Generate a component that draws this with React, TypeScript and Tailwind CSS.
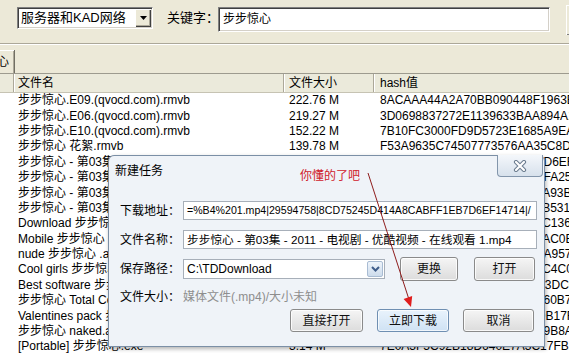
import React from "react";

const rows: [string, string, string][] = [
  ["步步惊心.E09.(qvocd.com).rmvb", "222.76 M", "8ACAAA44A2A70BB090448F1963B5D2E0"],
  ["步步惊心.E06.(qvocd.com).rmvb", "219.27 M", "3D0698837272E1139633BAA894A1C7F2"],
  ["步步惊心.E10.(qvocd.com).rmvb", "152.22 M", "7B10FC3000FD9D5723E1685A9EA40B63"],
  ["步步惊心 花絮.rmvb", "139.78 M", "F53A9635C74507773576AA35C8D92E10"],
  ["步步惊心 - 第03集 - 2011 - 电视剧 - 优酷视频 - 在线观看 1.mp4", "210.35 M", "4F2A90C1375B8E06249D17AD6EF0A3C91B2"],
  ["步步惊心 - 第03集 - 2011 - 电视剧 - 优酷视频 - 在线观看.flv", "188.60 M", "B7E3019C4A58260F1D39E84FA25D9E0B1C"],
  ["步步惊心 - 第03集 - 2011 - 电视剧 - 优酷视频.rmvb", "176.12 M", "29D04E1B63870A5C1928F46A93B07E2D58C"],
  ["步步惊心 - 第03集 - 2011 - 电视剧.avi", "201.44 M", "C5170A82E39D4065B21F739B531E8A04C7D"],
  ["Download 步步惊心 全集.exe", "1.25 M", "80E2B4719C3F05A6D812374C136F0B9E2A5"],
  ["Mobile 步步惊心 3gp.zip", "45.10 M", "6A1F8203D75E49B0C361425AC0E9F7D3"],
  ["nude 步步惊心 .avi", "12.08 M", "1D94B0E7C25F3086A41E792A9573B1C8E0D"],
  ["Cool girls 步步惊心.zip", "8.61 M", "E3B85091F4A27C6D0183592C4C07A2E91"],
  ["Best software 步步惊心.exe", "2.37 M", "0C7E2A9158D3B46F07A1E523DCC4E8190"],
  ["步步惊心  Total Collection.rar", "96.52 M", "A58F1C03E7294B6D1850E9360B7E2D4A1"],
  ["Valentines pack 步步惊心.zip", "5.49 M", "5B02D9E6148A7C3F9E2051DB17F04C6E2"],
  ["步步惊心  naked.avi", "33.70 M", "D4618E2B0A73C95F14E08369B8A2F51D"],
  ["[Portable] 步步惊心.exe", "3.14 M", "7E0A3F5C92B18D640E7A3C17FB29D0E4"],
];

function Win7Button({ label, w, primary }: { label: string; w: string; primary?: boolean }) {
  return (
    <div
      className={
        primary
          ? `${w} h-full shrink-0 rounded-[3px] border border-[#6f8fb2] bg-gradient-to-b from-[#e9f3fc] to-[#cfe2f4] shadow-[inset_0_0_0_1px_rgba(255,255,255,0.7)] flex items-center justify-center text-[12px] leading-[14px] text-[#111]`
          : `${w} h-full shrink-0 rounded-[3px] border border-[#8a8a8a] bg-gradient-to-b from-[#f5f5f5] to-[#dcdcdc] shadow-[inset_0_0_0_1px_rgba(255,255,255,0.8)] flex items-center justify-center text-[12px] leading-[14px] text-[#111]`
      }
    >
      {label}
    </div>
  );
}

export default function App() {
  return (
    <div className="relative w-[569px] h-[353px] overflow-hidden bg-[#ece9d8] text-black font-['Liberation_Sans','Noto_Sans_CJK_SC',sans-serif] text-[12px]">
      {/* top bar */}
      <div className="flex h-[43px] items-start pt-[7px] pl-[17px]">
        <div className="flex h-[22px] w-[136px] shrink-0 border border-[#808080] border-r-white border-b-white bg-white shadow-[inset_1px_1px_0_#404040,inset_-1px_-1px_0_#d4d0c8]">
          <div className="flex-1 pl-[3px] pt-[2px] text-[13px] leading-[16px] whitespace-nowrap overflow-hidden">服务器和KAD网络</div>
          <div className="mt-[1px] mr-[1px] flex h-[18px] w-[16px] items-center justify-center bg-[#ece9d8] shadow-[inset_1px_1px_0_#ffffff,inset_-1px_-1px_0_#404040,inset_-2px_-2px_0_#aca899]">
            <svg width="7" height="4" viewBox="0 0 7 4"><path d="M0 0 H7 L3.5 4 Z" fill="#000" /></svg>
          </div>
        </div>
        <span className="ml-[14px] mt-[3px] w-[51px] shrink-0 whitespace-nowrap text-[13px] leading-[16px]">关键字：</span>
        <div className="h-[25px] w-[332px] shrink-0 border border-[#808080] border-r-white border-b-white bg-white shadow-[inset_1px_1px_0_#404040,inset_-1px_-1px_0_#d4d0c8] pl-[4px] pt-[4px] text-[12px] leading-[15px]">
          步步惊心
        </div>
        <div className="ml-[16px] mt-[-2px] h-[30px] w-[10px] shrink-0 shadow-[inset_1px_1px_0_#ffffff,inset_0_-1px_0_#808080]" />
      </div>
      {/* separator */}
      <div className="h-[1px] bg-[#aca899]" />
      <div className="h-[1px] bg-white" />
      {/* tab row */}
      <div className="flex h-[28px] items-end">
        <div className="h-[23px] w-[15px] overflow-hidden border-r border-[#716f64] shadow-[inset_0_1px_0_#ffffff,inset_-1px_0_0_#aca899] flex items-center">
          <span className="ml-[-3px] text-[12px] leading-[14px]">心</span>
        </div>
      </div>
      {/* list */}
      <div className="border-t border-[#9d9b8f] bg-white">
        <div className="flex h-[19px] items-center border-b border-[#c6c3b3] bg-[#ebeadb] whitespace-nowrap leading-[15px]">
          <div className="h-full w-[13px] shrink-0" />
          <div className="h-full w-[270px] shrink-0 border-l border-[#aca899] shadow-[inset_1px_0_0_#ffffff] pl-[4px] flex items-center">文件名</div>
          <div className="h-full w-[90px] shrink-0 border-l border-[#aca899] shadow-[inset_1px_0_0_#ffffff] pl-[5px] flex items-center">文件大小</div>
          <div className="h-full flex-1 border-l border-[#aca899] shadow-[inset_1px_0_0_#ffffff] pl-[6px] flex items-center">hash值</div>
        </div>
        <div className="flex flex-col">
          {rows.map(([name, size, hash], i) => (
            <div key={i} className="flex h-[15.4px] items-center whitespace-nowrap leading-[15px]">
              <div className="w-[13px] shrink-0" />
              <div className="w-[270px] shrink-0 overflow-hidden pl-[5px]">{name}</div>
              <div className="w-[90px] shrink-0 overflow-hidden pl-[6px]">{size}</div>
              <div className="flex-1 overflow-hidden pl-[7px]">{hash}</div>
            </div>
          ))}
        </div>
      </div>

      {/* dialog */}
      <div className="absolute left-[108px] top-[155px] h-[192px] w-[437px] rounded-t-[6px] border border-[#7b8fa6] bg-[#eff3f8] shadow-[1px_2px_4px_rgba(0,0,0,0.3)]">
        <div className="absolute left-[388px] top-[-1px] flex h-[22px] w-[46px] items-center justify-center rounded-b-[4px] border border-t-0 border-[#8295ab] bg-gradient-to-b from-[#f4f7fb] to-[#d7e1ec]">
          <svg width="14" height="12" viewBox="0 0 14 12">
            <path d="M3 2 L11 10 M11 2 L3 10" stroke="#6a7b8e" strokeWidth="4.2" strokeLinecap="round" />
            <path d="M3 2 L11 10 M11 2 L3 10" stroke="#ffffff" strokeWidth="2.2" strokeLinecap="round" />
          </svg>
        </div>
        <div className="flex flex-col">
          <div className="flex h-[30px] items-center pl-[6px] text-[12px] leading-[14px]">新建任务</div>
          <div className="mt-[15px] flex h-[19px] items-center pl-[11px]">
            <span className="w-[63px] shrink-0 whitespace-nowrap leading-[14px]">下载地址：</span>
            <div className="h-[19px] w-[354px] shrink-0 overflow-hidden whitespace-nowrap border border-[#a7afb9] bg-white pl-[3px] text-[10.6px] leading-[17px]">
              =%B4%201.mp4|29594758|8CD75245D414A8CABFF1EB7D6EF14714|/
            </div>
          </div>
          <div className="mt-[10px] flex h-[19px] items-center pl-[11px]">
            <span className="w-[63px] shrink-0 whitespace-nowrap leading-[14px]">文件名称：</span>
            <div className="h-[19px] w-[354px] shrink-0 overflow-hidden whitespace-nowrap border border-[#a7afb9] bg-white pl-[3px] text-[11.7px] leading-[17px]">
              步步惊心 - 第03集 - 2011 - 电视剧 - 优酷视频 - 在线观看 1.mp4
            </div>
          </div>
          <div className="mt-[8px] flex h-[24px] items-center pl-[11px]">
            <span className="w-[63px] shrink-0 whitespace-nowrap leading-[14px]">保存路径：</span>
            <div className="flex h-[20px] w-[202px] shrink-0 items-center border border-[#a7afb9] bg-white pl-[3px] pr-[1px]">
              <span className="flex-1 whitespace-nowrap text-[12px] leading-[14px]">C:\TDDownload</span>
              <div className="flex h-[16px] w-[16px] items-center justify-center rounded-[2px] border border-[#a9bcd3] bg-gradient-to-b from-[#eef4fb] to-[#cddcec]">
                <svg width="9" height="6" viewBox="0 0 9 6"><path d="M1 1 L4.5 4.5 L8 1" fill="none" stroke="#3f5d8a" strokeWidth="2" /></svg>
              </div>
            </div>
            <div className="ml-[15px] h-[24px]"><Win7Button label="更换" w="w-[58px]" /></div>
            <div className="ml-[16px] h-[24px]"><Win7Button label="打开" w="w-[61px]" /></div>
          </div>
          <div className="mt-[6px] flex h-[20px] items-center pl-[11px]">
            <span className="w-[63px] shrink-0 whitespace-nowrap leading-[14px]">文件大小：</span>
            <span className="whitespace-nowrap leading-[14px] text-[#8e8e8e]">媒体文件(.mp4)/大小未知</span>
          </div>
          <div className="mt-[2px] flex h-[23px] pl-[181px]">
            <Win7Button label="直接打开" w="w-[73px]" />
            <div className="ml-[14px] h-full"><Win7Button label="立即下载" w="w-[72px]" primary /></div>
            <div className="ml-[14px] h-full"><Win7Button label="取消" w="w-[71px]" /></div>
          </div>
        </div>
      </div>

      {/* annotation */}
      <span className="absolute left-[300px] top-[169px] whitespace-nowrap text-[12px] leading-[14px] text-[#d0202a]">你懂的了吧</span>
      <svg className="pointer-events-none absolute left-0 top-0" width="569" height="353" viewBox="0 0 569 353">
        <line x1="368" y1="173" x2="408.5" y2="298" stroke="#8e1c1c" strokeWidth="1" />
        <path d="M411 307 L403.6 298.9 L412.2 296.1 Z" fill="#e01e1e" />
      </svg>
    </div>
  );
}
